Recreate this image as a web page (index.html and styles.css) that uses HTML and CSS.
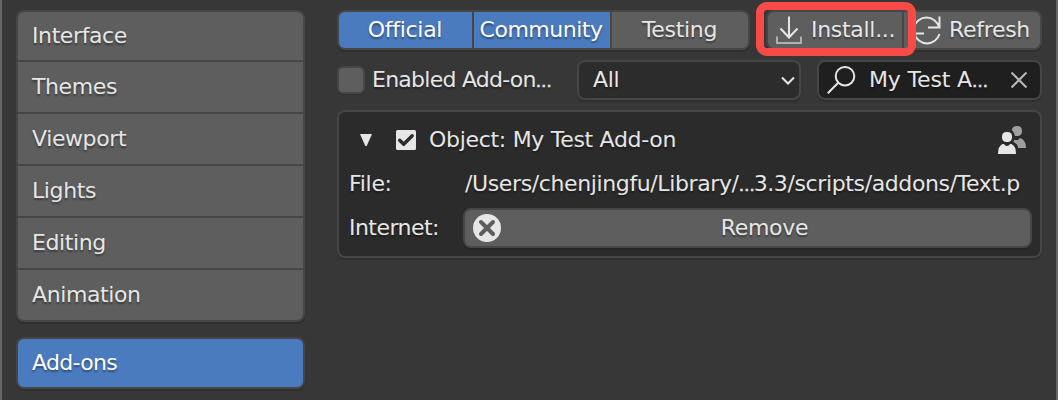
FILE: index.html
```html
<!DOCTYPE html>
<html lang="en">
<head>
<meta charset="utf-8">
<title>Preferences</title>
<link rel="stylesheet" href="styles.css">
</head>
<body>
<div class="window">
  <nav class="sidebar">
    <div class="tabs">
      <div class="tab"><span>Interface</span></div>
      <div class="tab"><span>Themes</span></div>
      <div class="tab"><span>Viewport</span></div>
      <div class="tab"><span>Lights</span></div>
      <div class="tab"><span>Editing</span></div>
      <div class="tab"><span>Animation</span></div>
    </div>
    <div class="tabs">
      <div class="tab active"><span>Add-ons</span></div>
    </div>
  </nav>
  <main class="content">
    <div class="toolbar">
      <div class="group levels">
        <div class="button active official"><span>Official</span></div>
        <div class="button active community"><span>Community</span></div>
        <div class="button testing"><span>Testing</span></div>
      </div>
      <div class="group actions">
        <div class="button install">
          <svg class="icon-install" width="28" height="30" viewBox="0 0 28 30" fill="none" stroke-width="2"><path d="M14 1.500v21M5.500 13.500l8.500 9 8.500-9" stroke="#e6e6e6"/><path d="M2 21.500v6.500h24v-6.500" stroke="#b0b0b0"/></svg>
          <span>Install...</span>
        </div>
        <div class="button refresh">
          <svg class="icon-refresh" width="30" height="30" viewBox="0 0 30 30" fill="none" stroke="#e6e6e6" stroke-width="2"><path d="M2 12A13 13 0 0 1 27 12M27.500 1.500v11H16M27.500 19A13 13 0 0 1 2.500 19M1.500 29V18.500H12"/></svg>
          <span>Refresh</span>
        </div>
        <div class="highlight"></div>
      </div>
    </div>
    <div class="filters">
      <div class="checkbox"></div>
      <span class="enabled">Enabled Add-on<span class="dots">…</span></span>
      <div class="select"><span>All</span>
        <svg width="14" height="10" viewBox="0 0 14 10" fill="none" stroke="#e6e6e6" stroke-width="2"><path d="M1 2.500l6 6 6-6"/></svg>
      </div>
      <div class="search">
        <svg class="icon-search" width="30" height="30" viewBox="0 0 30 30" fill="none" stroke="#e6e6e6" stroke-width="2"><circle cx="18" cy="11.200" r="9.300"/><path d="M11.200 17.700L.8 28.200"/></svg>
        <span>My Test A<span class="dots">…</span></span>
        <svg class="icon-clear" width="18" height="18" viewBox="0 0 18 18" fill="none" stroke="#b8b8b8" stroke-width="2"><path d="M1.500 1.500l15 15M16.500 1.500l-15 15"/></svg>
      </div>
    </div>
    <section class="panel">
      <div class="addon-header">
        <svg class="icon-expand" width="12" height="12" viewBox="0 0 12 12"><path d="M0 0h12L6.700 12H5.300z" fill="#e6e6e6"/></svg>
        <svg class="icon-check" width="20" height="20" viewBox="0 0 20 20"><rect width="20" height="20" rx="1.500" fill="#e6e6e6"/><path d="M3.700 10.200l4 4 8.500-8.500" fill="none" stroke="#2b2b2b" stroke-width="3.400" stroke-linecap="round" stroke-linejoin="round"/></svg>
        <span class="title">Object: My Test Add-on</span>
        <svg class="icon-community" width="28" height="28" viewBox="0 0 28 28"><path d="M14 3.500Q14.500 0 19 0Q24 0 24 5Q24 9.500 20 10H17Q16 5.500 14 4.500zM16 14h4l2-2q3 .5 4.500 3.500 1.500 2 1.500 6.500h-8q0-4-4.500-6z" fill="#9f9f9f"/><rect x="4" y="6" width="10" height="10" rx="4.200" fill="#e6e6e6"/><path d="M0 28q0-8 4.500-10h1.500q1 2 3 2t3-2h1.500q4.500 2 4.500 10z" fill="#e6e6e6"/></svg>
      </div>
      <div class="row file"><span class="key">File:</span><span class="path">/Users/chenjingfu/Library/<span class="dots">…</span>3.3/scripts/addons/Text.p</span></div>
      <div class="row internet"><span class="key">Internet:</span>
        <div class="remove">
          <svg width="28" height="28" viewBox="0 0 28 28"><circle cx="14" cy="14" r="14" fill="#e6e6e6"/><path d="M8 8l12 12M20 8L8 20" stroke="#5d5d5d" stroke-width="4" stroke-linecap="round"/></svg>
          <span>Remove</span>
        </div>
      </div>
    </section>
  </main>
</div>
</body>
</html>
```

FILE: styles.css
```css
* { box-sizing: border-box; }
body {
  margin: 0;
  background: #373737;
  color: #e6e6e6;
  font: 22px/26px "DejaVu Sans", sans-serif;
}
svg { display: block; flex: none; }
span { white-space: nowrap; text-shadow: 0 2px 2px rgba(0, 0, 0, .4); letter-spacing: -.3px; }
.dots { font-size: 16px; line-height: 1; letter-spacing: -1px; -webkit-text-stroke: .6px #e6e6e6; }
.window {
  display: flex;
  gap: 32px;
  width: 1058px;
  height: 400px;
  padding: 10px 14px 0;
  border: solid #666;
  border-width: 0 2px;
  overflow: hidden;
}
.sidebar { display: flex; flex-direction: column; gap: 15px; width: 289px; flex: none; }
.tabs, .group, .select, .search, .remove {
  border: 2px solid #464646;
  border-radius: 8px;
  background: #464646;
  box-shadow: 0 2px 0 #2f2f2f;
}
.tabs { display: flex; flex-direction: column; gap: 2px; }
.tab { display: flex; align-items: center; height: 50px; padding: 0 0 1px 14px; background: #5e5e5e; }
.tab span { letter-spacing: -.4px; }
.tab:first-child { height: 48px; border-radius: 6px 6px 0 0; }
.tab:last-child { border-radius: 0 0 6px 6px; }
.tab.active { border-radius: 6px; padding-bottom: 0; }
.tab.active span { letter-spacing: -.7px; }
.active { background: #4a7bbf; color: #fff; }
.content { width: 705px; flex: none; }
.toolbar { display: flex; gap: 16px; height: 40px; }
.group { display: flex; gap: 2px; height: 40px; }
.levels { width: 413px; }
.actions { position: relative; width: 276px; }
.button { display: flex; align-items: center; justify-content: center; height: 36px; padding-bottom: 1px; background: #5e5e5e; }
.button.active { background: #4a7bbf; }
.button:first-child { border-radius: 6px 0 0 6px; }
.testing, .refresh { border-radius: 0 6px 6px 0; }
.official { width: 133px; padding-right: 1px; }
.community { width: 136px; padding-right: 2px; }
.community span { letter-spacing: -.5px; }
.testing { flex: 1; padding-right: 1px; }
.install { width: 134px; justify-content: flex-start; padding-left: 7px; gap: 8px; }
.refresh { flex: 1; justify-content: flex-start; padding-left: 8px; gap: 7px; }
.highlight {
  position: absolute;
  left: -12px;
  top: -10px;
  width: 160px;
  height: 54px;
  border: 8px solid #f84b47;
  border-radius: 11px;
}
.filters { display: flex; align-items: center; height: 40px; margin-top: 10px; }
.checkbox { width: 28px; height: 28px; border: 2px solid #464646; border-radius: 6px; background: #5e5e5e; box-shadow: 0 1px 0 #2f2f2f; }
.enabled { width: 205px; margin-left: 7px; padding-bottom: 1px; letter-spacing: -.75px; }
.select { display: flex; align-items: center; justify-content: space-between; width: 224px; height: 40px; padding: 0 4px 0 14px; background: #2c2c2c; }
.select > span, .search > span { padding-bottom: 1px; }
.search { display: flex; align-items: center; width: 225px; height: 40px; margin-left: 16px; padding: 0 12px 0 8px; background: #1f1f1f; }
.search > span { margin-left: 12px; letter-spacing: -.15px; }
.icon-clear { margin-left: auto; }
.panel { height: 148px; margin-top: 10px; border: 2px solid #464646; border-radius: 8px; background: #2b2b2b; box-shadow: 0 2px 0 #303030; padding: 6px 8px 0 10px; }
.addon-header { display: flex; align-items: center; height: 44px; padding-left: 11px; }
.icon-check { margin-left: 24px; }
.title { margin-left: 13px; }
.icon-community { margin-left: auto; margin-right: 6px; }
.row { display: flex; align-items: center; height: 44px; }
.key { width: 116px; flex: none; }
.path { letter-spacing: -.38px; }
.internet { height: 40px; margin-top: 2px; }
.internet .key { width: 114px; letter-spacing: -.55px; }
.remove { display: flex; align-items: center; width: 569px; height: 40px; padding-left: 8px; background: #5e5e5e; box-shadow: 0 2px 0 #242424; }
.remove span { flex: 1; text-align: center; padding-right: 2px; }
```
